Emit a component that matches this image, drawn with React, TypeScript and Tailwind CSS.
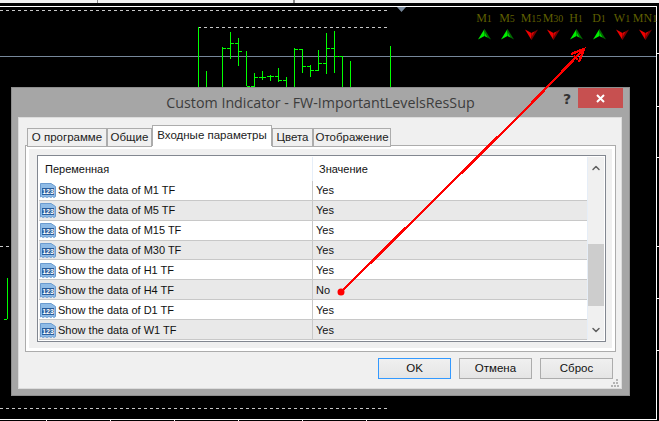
import React from 'react';
import { ChevronDown, ChevronUp } from 'lucide-react';

const BARS: [number, number, number, number?, number?][] = [
  // x, high, low, open tick y, close tick y
  [198, 27, 87],
  [206, 71, 87],
  [222, 47, 87, undefined, 48],
  [230, 32, 59, 48, 43],
  [238, 38, 66, 43, 51],
  [246, 51, 86, undefined, 86],
  [254, 73, 87, 86, 77],
  [262, 71, 80, 77, 77],
  [270, 75, 81, 76, 76],
  [278, 68, 82, 76, 80],
  [286, 77, 87, 80, 87],
  [294, 48, 87, 87, 49],
  [302, 49, 73, 49, 66],
  [310, 65, 77, 66, 70],
  [318, 50, 71, 70, 63],
  [326, 33, 74, 63, 48],
  [334, 31, 73, 48, 56],
  [342, 56, 87, 56],
  [350, 61, 87],
  [390, 46, 87],
  [7, 278, 319, 319],
];

const LABELS = [
  ['M', '1'],
  ['M', '5'],
  ['M', '15'],
  ['M', '30'],
  ['H', '1'],
  ['D', '1'],
  ['W', '1'],
  ['MN', '1'],
];
const DIRS = [1, 1, 0, 0, 1, 1, 0, 0];
const CENTERS = [484, 507, 531, 553, 576, 599, 622, 645];

const ROWS = [
  ['M1', 'Yes'],
  ['M5', 'Yes'],
  ['M15', 'Yes'],
  ['M30', 'Yes'],
  ['H1', 'Yes'],
  ['H4', 'No'],
  ['D1', 'Yes'],
  ['W1', 'Yes'],
];

const TABS = [
  ['О программе', 'w-[80px]'],
  ['Общие', 'w-[45px]'],
  ['Входные параметры', 'w-[120px]'],
  ['Цвета', 'w-[41px]'],
  ['Отображение', 'w-[78px]'],
];

const Chart = () => (
  <svg className="absolute left-0 top-0" width="659" height="421" shapeRendering="crispEdges">
    <rect x="0" y="0" width="659" height="3" fill="#f0f0f0" />
    <rect x="97" y="0" width="1" height="3" fill="#888" />
    <rect x="293" y="0" width="2" height="3" fill="#888" />
    <rect x="0" y="6" width="657" height="1" fill="#fff" />
    <rect x="656" y="6" width="1" height="414" fill="#fff" />
    <rect x="0" y="419" width="657" height="1" fill="#fff" />
    {[46, 110, 174, 238, 302, 366].map((x) => (
      <rect key={x} x={x} y="419" width="1" height="2" fill="#fff" />
    ))}
    {[53, 106, 157, 246, 298, 350].map((y) => (
      <rect key={y} x="656" y={y} width="3" height="1" fill="#fff" />
    ))}
    <line x1="0" y1="10.5" x2="387" y2="10.5" stroke="#c8c8c8" strokeDasharray="3 3" />
    <line x1="198" y1="27.5" x2="387" y2="27.5" stroke="#c8c8c8" strokeDasharray="3 3" />
    <line x1="0" y1="408.5" x2="390" y2="408.5" stroke="#c8c8c8" strokeDasharray="3 3" />
    <line x1="0" y1="246.5" x2="11" y2="246.5" stroke="#c8c8c8" strokeDasharray="3 3" />
    <rect x="0" y="56" width="656" height="1" fill="#76879a" />
    <polygon points="397,7 406,7 401.5,12" fill="#76879a" shapeRendering="auto" />
    {BARS.map(([x, hi, lo, open, close]) => (
      <g key={x} fill="#00ff00">
        <rect x={x} y={hi} width="1" height={lo - hi} />
        {open !== undefined && <rect x={x - 3} y={open} width="3" height="1" />}
        {close !== undefined && <rect x={x + 1} y={close} width="3" height="1" />}
      </g>
    ))}
  </svg>
);

const Signals = () => (
  <>
    {LABELS.map(([letter, digits], i) => (
      <div
        key={letter + digits}
        className="absolute top-[11px] w-[30px] -ml-[15px] text-center text-[12px] leading-[14px] whitespace-nowrap text-[#5f5f00] font-['Liberation_Serif',serif]"
        style={{ left: CENTERS[i] }}
      >
        {letter}
        <span className="text-[10px]">{digits}</span>
      </div>
    ))}
    {CENTERS.map((x, i) => (
      <svg key={x} className="absolute top-[29px]" style={{ left: x - 6 }} width="13" height="11" viewBox="0 0 13 11">
        {DIRS[i] ? (
          <>
            <polygon points="6.5,0 0,10.5 6.5,7" fill="#00f000" />
            <polygon points="6.5,0 13,10.5 6.5,7" fill="#006a00" />
            <polygon points="6.5,3 9.5,8.5 6.5,7" fill="#00e000" />
          </>
        ) : (
          <>
            <polygon points="0,0.5 6.5,4 6.5,11" fill="#f00000" />
            <polygon points="13,0.5 6.5,4 6.5,11" fill="#7a0000" />
            <polygon points="9.5,2.5 6.5,4 6.5,8" fill="#e00000" />
          </>
        )}
      </svg>
    ))}
  </>
);

// little blue "123" page used for integer params
const ParamIcon = () => (
  <svg width="16" height="16" viewBox="0 0 16 16" className="shrink-0">
    <path
      d="M0.5 1.5 H11 L15.5 4.5 V14.5 L14 15.5 L12.5 14.5 L11 15.5 L9 14.5 L7 15.5 L5 14.5 L3 15.5 L1.5 14.5 L0.5 15 Z"
      fill="#8fbbe6"
      stroke="#6b9bcf"
    />
    <rect x="2" y="6" width="12" height="7" fill="#2a5d9c" />
    <text x="8" y="12" textAnchor="middle" fontSize="7" fontWeight="700" fill="#fff" fontFamily="Liberation Sans, sans-serif">
      123
    </text>
  </svg>
);

const ListView = () => (
  <div className="flex w-[569px] h-[187px] border border-[#828790] bg-white p-px text-[11px] text-[#111]">
    <div className="flex-1 flex flex-col min-w-0">
      <div className="grid grid-cols-[274px_1fr] h-[24px] items-center bg-white">
        <div className="pl-[6px] pt-[1px] h-full flex items-center border-r border-[#e6eef8]">Переменная</div>
        <div className="pl-[6px] pt-[1px]">Значение</div>
      </div>
      {ROWS.map(([tf, val], i) => (
        <div
          key={tf}
          className={`grid grid-cols-[274px_1fr] h-[20px] border-b border-[#c8c8c8] ${i % 2 ? 'bg-[#e9e9e9]' : 'bg-white'}`}
        >
          <div className="flex items-center gap-[2px] pl-[1px] border-r border-[#c8c8c8] whitespace-nowrap leading-none">
            <ParamIcon />
            <span className="pt-[1px]">Show the data of {tf} TF</span>
          </div>
          <div className="flex items-center pl-[3px] pt-[1px] leading-none">{val}</div>
        </div>
      ))}
    </div>
    <div className="w-[17px] flex flex-col bg-[#f0f0f0] border-l border-[#e6eef8] text-[#606060]">
      <div className="h-[20px] flex items-center justify-center pt-[2px]">
        <ChevronUp size={12} strokeWidth={3} />
      </div>
      <div className="flex-1 pt-[67px]">
        <div className="h-[62px] bg-[#cdcdcd]" />
      </div>
      <div className="h-[20px] flex items-center justify-center">
        <ChevronDown size={12} strokeWidth={3} />
      </div>
    </div>
  </div>
);

const DialogButton = ({ label, focused }: { label: string; focused?: boolean }) => (
  <button
    className={`w-[73px] h-[21px] flex items-center justify-center text-[11.5px] text-[#111] bg-gradient-to-b from-[#f0f0f0] to-[#e5e5e5] border ${
      focused ? 'border-[#3399ff]' : 'border-[#acacac]'
    }`}
  >
    {label}
  </button>
);

const Dialog = () => (
  <div className="absolute left-[11px] top-[87px] w-[619px] h-[309px] bg-[#a6a6a6] border border-[#8e8e8e] flex flex-col font-['Liberation_Sans',sans-serif]">
    <div className="h-[29px] shrink-0 relative flex items-center justify-center text-[14.25px] text-[#3c3c3c] font-['Open_Sans',sans-serif]">
      Custom Indicator - FW-ImportantLevelsResSup
      <span className="absolute left-[551px] top-[1px] text-[14px] font-bold text-[#333] font-['DejaVu_Sans',sans-serif]">?</span>
      <div className="absolute left-[566px] top-0 w-[45px] h-[20px] bg-[#c75050] flex items-center justify-center">
        <svg width="9" height="9" viewBox="0 0 9 9">
          <path d="M1 1 L8 8 M8 1 L1 8" stroke="#fff" strokeWidth="2" />
        </svg>
      </div>
    </div>
    <div className="ml-[6px] w-[604px] h-[272px] bg-[#f0f0f0] border border-[#dcdcdc] relative pt-[7px]">
      <div className="flex pl-[8px] h-[21px] items-end relative z-10 text-[11.5px] text-[#222]">
        {TABS.map(([label, w], i) =>
          i === 2 ? (
            <div key={label} className={`${w} h-[21px] bg-white border border-b-0 border-[#acacac] flex items-center justify-center whitespace-nowrap`}>
              {label}
            </div>
          ) : (
            <div key={label} className={`${w} h-[19px] -mb-px bg-[#f0f0f0] border border-[#acacac] flex items-center justify-center whitespace-nowrap`}>
              {label}
            </div>
          ),
        )}
      </div>
      <div className="ml-[6px] w-[591px] h-[207px] -mt-px border border-[#acacac] bg-[#f0f0f0]">
        <div className="h-full border-[3px] border-white pl-[8px] pt-[6px]">
          <ListView />
        </div>
      </div>
      <div className="flex gap-[8px] justify-end pr-[8px] mt-[6px]">
        <DialogButton label="OK" focused />
        <DialogButton label="Отмена" />
        <DialogButton label="Сброс" />
      </div>
      <svg className="absolute right-[2px] bottom-[1px]" width="8" height="8" fill="#b4b4b4" shapeRendering="crispEdges">
        <rect x="5" y="0" width="2" height="2" />
        <rect x="2" y="3" width="2" height="2" />
        <rect x="5" y="3" width="2" height="2" />
        <rect x="0" y="6" width="2" height="2" />
        <rect x="3" y="6" width="2" height="2" />
        <rect x="6" y="6" width="2" height="2" />
      </svg>
    </div>
  </div>
);

const RedArrow = () => (
  <svg className="absolute left-0 top-0" width="659" height="421">
    <g stroke="#ff0000" strokeWidth="2.4" fill="none" shapeRendering="crispEdges">
      <path d="M341 292 L524 111 L583 50" />
      <path d="M571 54 L584 49 L579 62" />
      <path d="M574 56 L578 60" />
    </g>
    <circle cx="341" cy="292" r="3.5" fill="#ff0000" />
  </svg>
);

export default function App() {
  return (
    <div className="relative w-[659px] h-[421px] overflow-hidden bg-black">
      <Chart />
      <Signals />
      <Dialog />
      <RedArrow />
    </div>
  );
}
